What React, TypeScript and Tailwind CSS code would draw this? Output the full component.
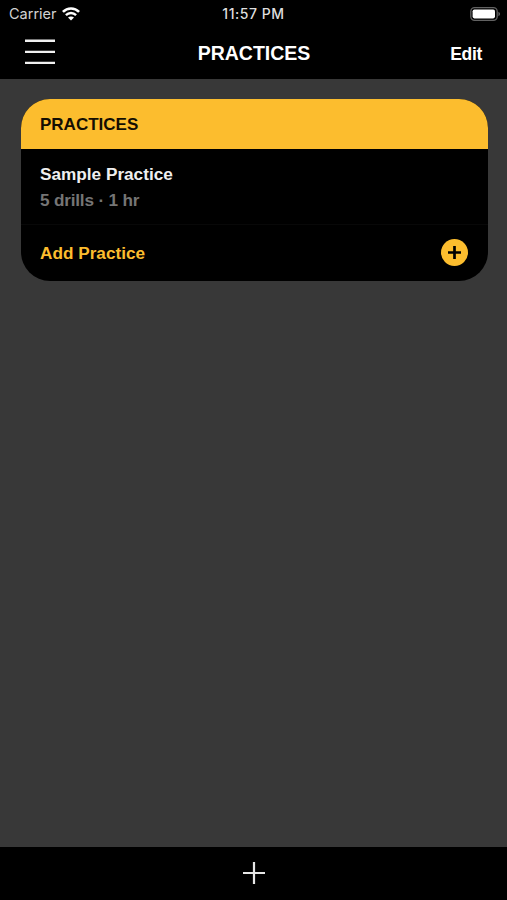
const WifiIcon = () => (
  <svg className="h-[14px] w-[18px]" viewBox="0 0 18 14" fill="none" stroke="#fff">
    <path d="M0.9 4.9C5.4 0.3 12.6 0.3 17.1 4.9" strokeWidth={2.6} />
    <path d="M3.9 8.2C6.8 5.3 11.2 5.3 14.1 8.2" strokeWidth={2.4} />
    <path d="M9 13.4L6 10.6C7.6 9 10.4 9 12 10.6Z" fill="#fff" stroke="none" />
  </svg>
);

const BatteryIcon = () => (
  <svg className="h-[14px] w-[31px]" viewBox="0 0 31 14" fill="none">
    <rect x="0.8" y="0.7" width="26.4" height="12.6" rx="3.8" stroke="#626262" strokeWidth={1.3} />
    <rect x="2.6" y="2.4" width="22.4" height="9" rx="1.8" fill="#fff" />
    <path d="M28.4 4.8C30.6 5.6 30.6 8.4 28.4 9.2Z" fill="#626262" />
  </svg>
);

const StatusBar = () => (
  <div className="grid h-[27px] grid-cols-3 items-center pl-[9px] pr-[6px] font-[Inter,sans-serif]">
    <div className="flex items-center gap-[5px]">
      <span className="text-[14.5px] leading-5 text-[#d2d2d2]">Carrier</span>
      <WifiIcon />
    </div>
    <span className="mr-[3px] text-center text-[14px] font-medium leading-5 tracking-[0.55px] text-[#dedede]">
      11:57 PM
    </span>
    <div className="flex justify-end">
      <BatteryIcon />
    </div>
  </div>
);

const NavBar = () => (
  <div className="grid h-[52px] grid-cols-3 items-center pl-[25px] pr-[25px]">
    <button type="button" aria-label="Menu" className="w-[30px] pb-[2px]">
      <svg className="h-[28px] w-[30px]" viewBox="0 0 30 28" stroke="#f0f0f0" strokeWidth={2.4}>
        <path d="M0 2.8H30M0 13.9H30M0 24.9H30" />
      </svg>
    </button>
    <h1 className="pl-px text-center text-[19.5px] font-bold leading-6">PRACTICES</h1>
    <button type="button" className="pt-px text-right text-[17.5px] font-bold leading-5 tracking-[-0.3px]">
      Edit
    </button>
  </div>
);

const PracticeCard = () => (
  <section className="overflow-hidden rounded-[29px] bg-black text-[17.2px] font-bold leading-5">
    <h2 className="flex h-[50px] items-center bg-[#fcbd2e] px-[19.5px] pt-[2px] text-[17px] text-[#140e02]">
      PRACTICES
    </h2>
    <div className="flex h-[76px] flex-col justify-center gap-[6px] border-b border-[#080808] px-[19.5px] pt-[2px]">
      <p className="text-[#efefef]">Sample Practice</p>
      <p className="tracking-[-0.2px] text-[#757575]">5 drills · 1 hr</p>
    </div>
    <button
      type="button"
      className="flex h-[56px] w-full items-center justify-between px-[19.5px] text-[#fcbd2e]"
    >
      <span>Add Practice</span>
      <svg className="h-[27px] w-[27px]" viewBox="0 0 27 27">
        <circle cx="13.5" cy="13.5" r="13.5" fill="#fcbd2e" />
        <path d="M13.5 7V20M7 13.5H20" stroke="#000" strokeWidth={2.7} />
      </svg>
    </button>
  </section>
);

export default function App() {
  return (
    <div className="flex h-[900px] w-[507px] flex-col bg-[#383838] font-['Liberation_Sans',Arial,sans-serif] text-white">
      <header className="bg-black">
        <StatusBar />
        <NavBar />
      </header>

      <main className="flex-1 pl-[20.5px] pr-[19.5px] pt-[19.5px]">
        <PracticeCard />
      </main>

      <footer className="flex h-[53px] justify-center bg-black pt-[15px]">
        <button type="button" aria-label="Add" className="h-[22px] w-[22px]">
          <svg className="h-[22px] w-[22px]" viewBox="0 0 22 22" stroke="#e6e6e6" strokeWidth={2.2}>
            <path d="M11 0V22M0 11H22" />
          </svg>
        </button>
      </footer>
    </div>
  );
}
